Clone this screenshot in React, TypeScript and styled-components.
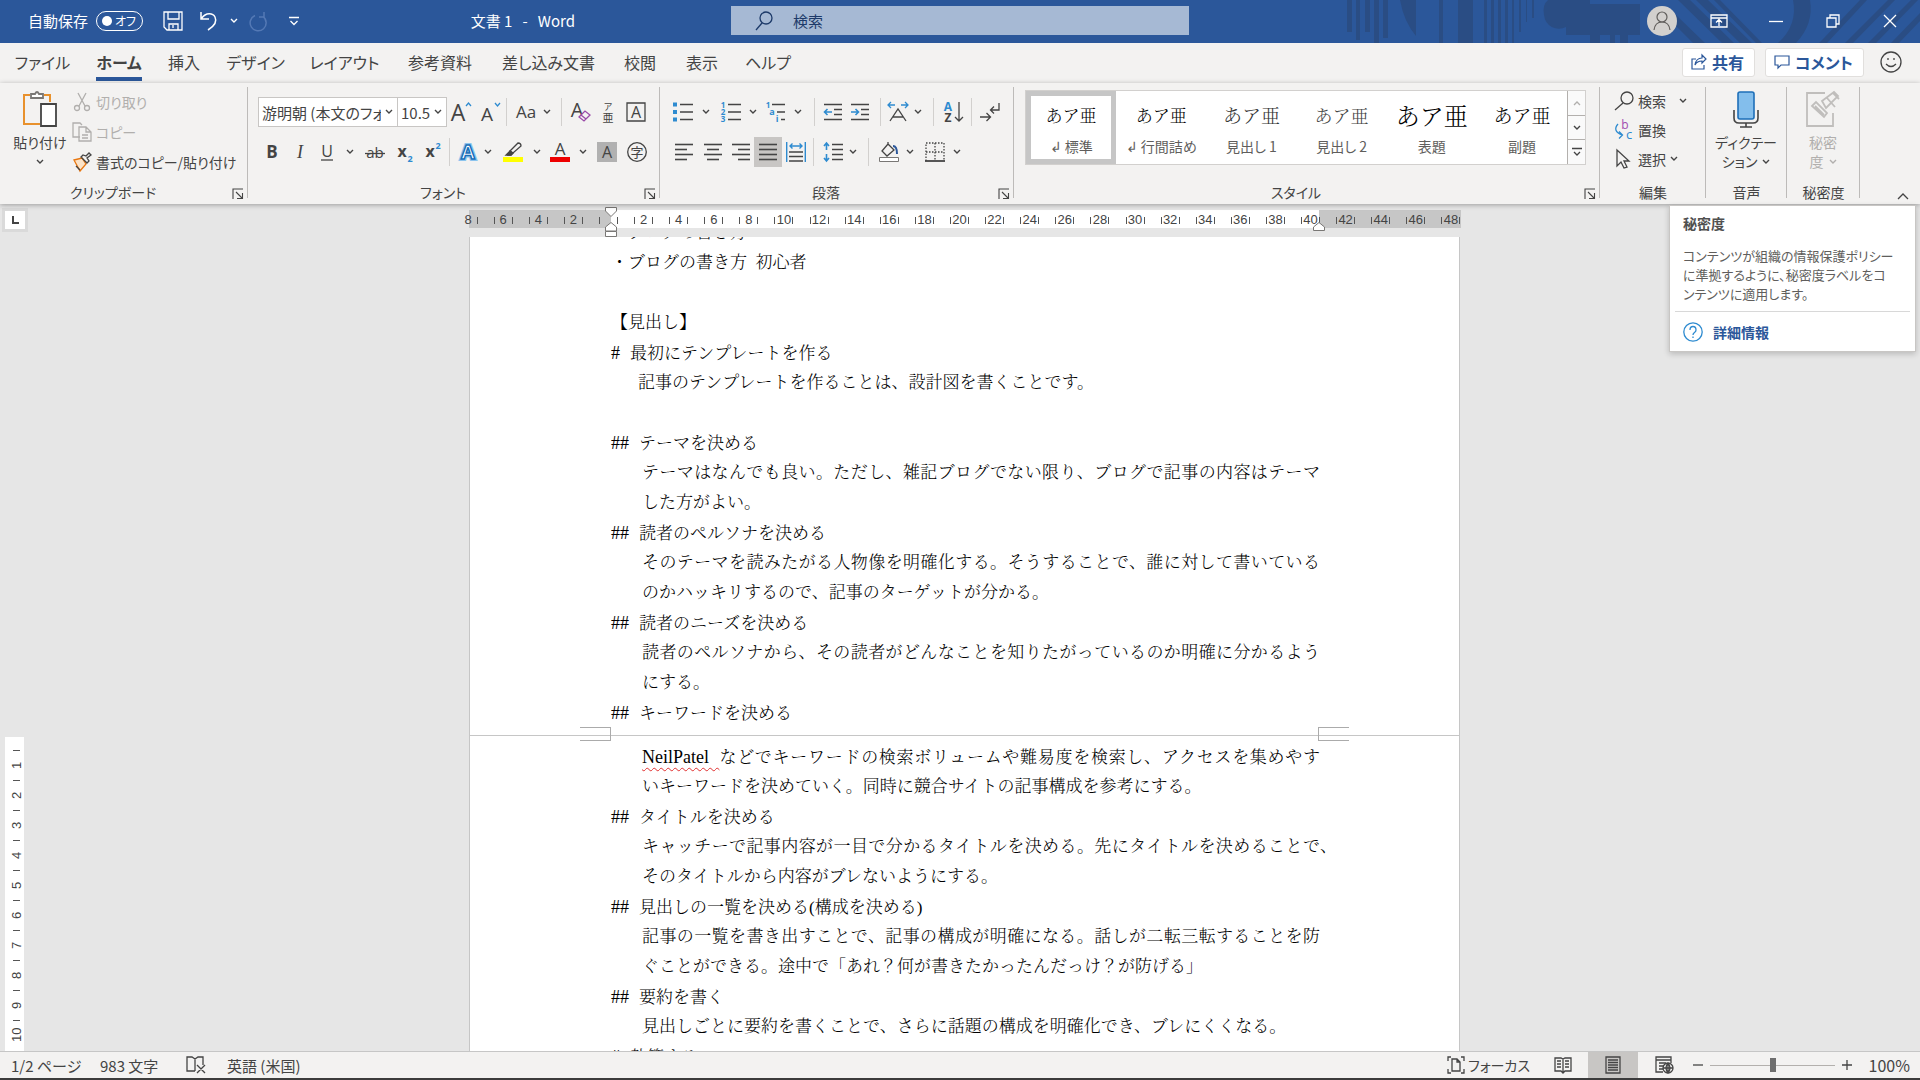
import React from "react";
import styled, { createGlobalStyle, css } from "styled-components";

const ui = `"Noto Sans CJK JP", "Noto Sans", sans-serif`;
const mincho = `"Liberation Serif", "Noto Serif CJK JP", "Noto Sans CJK JP", serif`;
const ink = "#444444";
const dim = "#b1afad";
const blue = "#2b579a";
const sky = "#2e8bd0";

const Global = createGlobalStyle`
  * { box-sizing: border-box; }
  html, body, #root { height: 100%; margin: 0; }
  body { font-family: ${ui}; font-size: 14px; color: ${ink}; overflow: hidden; font-feature-settings: "palt"; }
  button, input, select { font: inherit; font-feature-settings: inherit; color: inherit; border: 0; padding: 0; margin: 0; background: none; }
  svg { display: block; flex: none; overflow: visible; }
`;

const Shell = styled.div`
  height: 100vh;
  display: flex;
  flex-direction: column;
  background: #e6e6e6;
  white-space: nowrap;
`;

/* ---------- title bar ---------- */
const TitleBar = styled.header`
  position: relative;
  flex: none;
  height: 43px;
  display: grid;
  grid-template-columns: 731fr 458fr 731fr;
  align-items: center;
  padding-bottom: 2px;
  background: ${blue};
  color: #fff;
  font-size: 15px;
`;
const Decor = styled.svg`
  position: absolute;
  right: 0;
  top: 0;
  overflow: hidden;
`;
const QuickBar = styled.div`
  display: flex;
  align-items: center;
  padding-left: 28px;
`;
const AutoSave = styled.label`
  display: flex;
  align-items: center;
  gap: 8px;
  width: 134px;
`;
const Switch = styled.button`
  display: flex;
  align-items: center;
  justify-content: space-between;
  width: 47px;
  height: 20px;
  padding: 0 6px 0 5px;
  border: 1px solid #fff;
  border-radius: 10px;
  font-size: 12px;
  line-height: 18px;
  &::before {
    content: "";
    width: 10px;
    height: 10px;
    border-radius: 5px;
    background: #fff;
  }
`;
const Flat = styled.button<{ $w: number; $h?: number }>`
  display: flex;
  flex: none;
  align-items: center;
  justify-content: center;
  width: ${(p) => p.$w}px;
  height: ${(p) => p.$h ?? 30}px;
`;
const DocTitle = styled.div`
  margin-left: auto;
  padding-right: 156px;
  white-space: pre;
`;
const Search = styled.label`
  display: flex;
  align-items: center;
  gap: 20px;
  height: 29px;
  padding-left: 24px;
  background: #a6b9d4;
  color: #1d3a69;
`;
const SearchInput = styled.input`
  flex: 1;
  min-width: 0;
  outline: none;
  &::placeholder { color: #1d3a69; opacity: 1; }
`;
const WindowBar = styled.div`
  position: relative;
  display: flex;
  align-items: center;
  justify-content: flex-end;
  padding-right: 15px;
`;

/* ---------- tabs ---------- */
const TabRow = styled.nav`
  flex: none;
  display: flex;
  align-items: center;
  height: 40px;
  padding: 0 12px 2px 4px;
  background: #f3f2f1;
`;
const Tab = styled.button<{ $w: number; $on?: boolean }>`
  display: flex;
  justify-content: center;
  flex: none;
  width: ${(p) => p.$w}px;
  font-size: 16px;
  line-height: 30px;
  ${(p) => p.$on && css`
    font-weight: 700;
    span { box-shadow: 0 4px 0 ${blue}; }
  `}
`;
const TabActions = styled.div`
  display: flex;
  align-items: center;
  gap: 10px;
  margin-left: auto;
`;
const Action = styled.button`
  display: flex;
  align-items: center;
  gap: 5px;
  height: 29px;
  padding: 0 10px 0 8px;
  border: 1px solid #e1dfdd;
  border-radius: 3px;
  background: #fff;
  color: ${blue};
  font-size: 16px;
  font-weight: 700;
  line-height: 26px;
`;

/* ---------- ribbon ---------- */
const Ribbon = styled.section`
  position: relative;
  z-index: 2;
  flex: none;
  display: flex;
  height: 121px;
  background: #f3f2f1;
  box-shadow: 0 1px 5px rgba(0, 0, 0, 0.32);
`;
const GroupBox = styled.div<{ $w?: number }>`
  position: relative;
  display: flex;
  flex-direction: column;
  flex: ${(p) => (p.$w ? "none" : "1")};
  min-width: 0;
  width: ${(p) => (p.$w ? p.$w + "px" : "auto")};
  &::after {
    content: "";
    position: absolute;
    right: 0;
    top: 4px;
    bottom: 6px;
    width: 1px;
    background: #bdbbb9;
  }
`;
const GroupBody = styled.div<{ $pad?: string; $col?: boolean; $gap?: number }>`
  flex: 1;
  min-height: 0;
  display: flex;
  flex-direction: ${(p) => (p.$col ? "column" : "row")};
  gap: ${(p) => p.$gap ?? 0}px;
  padding: ${(p) => p.$pad ?? "0"};
`;
const GroupLabel = styled.div<{ $launch?: boolean }>`
  position: relative;
  flex: none;
  height: 22px;
  padding-right: ${(p) => (p.$launch ? 22 : 0)}px;
  line-height: 20px;
  text-align: center;
`;
const Launch = styled.button`
  position: absolute;
  right: 4px;
  top: 6px;
`;
const Row = styled.div`
  display: flex;
  align-items: center;
  height: 30px;
`;
const Tool = styled(Flat)<{ $on?: boolean }>`
  gap: 6px;
  background: ${(p) => (p.$on ? "#c8c6c4" : "none")};
`;
const Sep = styled.i<{ $w: number }>`
  flex: none;
  width: ${(p) => p.$w}px;
  height: 28px;
  background: linear-gradient(#d2d0ce, #d2d0ce) center / 1px 100% no-repeat;
`;
const Big = styled.button<{ $w: number; $off?: boolean }>`
  display: flex;
  flex-direction: column;
  align-items: center;
  justify-content: flex-start;
  flex: none;
  width: ${(p) => p.$w}px;
  padding-top: 7px;
  line-height: 19px;
  color: ${(p) => (p.$off ? dim : ink)};
  > svg:first-child { margin-bottom: 5px; }
  > svg:last-child { margin-top: 7px; }
  span { display: flex; align-items: center; gap: 5px; }
`;
const Item = styled.button<{ $off?: boolean; $h?: number }>`
  display: flex;
  align-items: center;
  gap: 4px;
  height: ${(p) => p.$h ?? 30}px;
  line-height: 20px;
  color: ${(p) => (p.$off ? dim : ink)};
  > svg:first-child { width: 20px; }
`;
const Picker = styled.div<{ $w: number }>`
  position: relative;
  display: flex;
  align-items: center;
  flex: none;
  width: ${(p) => p.$w}px;
  height: 30px;
  border: 1px solid #c8c6c4;
  margin-right: -1px;
  background: #fff;
  select {
    appearance: none;
    width: 100%;
    height: 28px;
    padding: 0 16px 0 3px;
    font-size: 15px;
    outline: none;
  }
  svg { position: absolute; right: 4px; pointer-events: none; }
`;
const Gallery = styled.div`
  display: flex;
  flex: 1;
  height: 75px;
  border: 1px solid #d2d0ce;
  background: #fff;
`;
const StyleCard = styled.button<{ $on?: boolean; $size: number; $tone: string }>`
  display: flex;
  flex-direction: column;
  align-items: center;
  justify-content: center;
  flex: 1 1 0;
  min-width: 0;
  gap: 6px;
  padding-top: 4px;
  border: 5px solid ${(p) => (p.$on ? "#c6c6c6" : "transparent")};
  line-height: 20px;
  color: #605e5c;
  b {
    height: 26px;
    line-height: 26px;
    font-family: ${mincho};
    font-feature-settings: "palt" 0;
    font-size: ${(p) => p.$size}px;
    font-weight: 300;
    color: ${(p) => p.$tone};
  }
`;
const GalleryNav = styled.div`
  display: flex;
  flex-direction: column;
  width: 18px;
  button {
    display: flex;
    flex: 1;
    align-items: center;
    justify-content: center;
    border-left: 1px solid #b3b0ad;
    background: #fafafa;
  }
  button + button { border-top: 1px solid #b3b0ad; }
`;
const RibbonEnd = styled.div`
  display: flex;
  align-items: flex-end;
  justify-content: flex-end;
  flex: none;
  width: 60px;
  padding: 0 11px 4px 0;
`;

/* ---------- tooltip ---------- */
const Tip = styled.aside`
  position: absolute;
  z-index: 3;
  right: 4px;
  top: 205px;
  width: 247px;
  padding: 7px 5px 6px;
  border: 1px solid #c8c6c4;
  background: #fff;
  box-shadow: 0 2px 6px rgba(0, 0, 0, 0.2);
  color: #605e5c;
  h4 { margin: 0 8px 13px; font-size: 14px; line-height: 20px; color: #505050; }
  p { margin: 0 8px; font-size: 13px; line-height: 19px; padding-bottom: 8px; }
`;
const TipLink = styled.a`
  display: flex;
  align-items: center;
  gap: 10px;
  padding: 7px 8px 0;
  border-top: 1px solid #d8d8d8;
  color: ${blue};
  font-weight: 700;
  line-height: 26px;
  text-decoration: none;
`;

/* ---------- workspace ---------- */
const Workspace = styled.main`
  flex: 1;
  min-height: 0;
  display: grid;
  grid-template-columns: 30px 1fr;
  grid-template-rows: 33px 1fr;
`;
const Corner = styled.div`
  display: flex;
  align-items: center;
  justify-content: center;
  width: 26px;
  height: 24px;
  margin: 4px 0 0 2px;
  border: 3px solid #dadada;
  background: #fff;
`;
const Centre = styled.div`
  display: flex;
  justify-content: center;
  min-height: 0;
  padding-right: 21px;
`;
const HRuler = styled.div`
  position: relative;
  width: 992px;
  height: 18px;
  margin-top: 6px;
  background: linear-gradient(90deg, #c6c6c6 142px, #fff 142px 850px, #c6c6c6 850px);
`;
const HScale = styled.div`
  height: 18px;
  margin-left: -5px;
  overflow: hidden;
  > div {
    display: grid;
    grid-template-columns: repeat(29, 1fr);
    width: 1018px;
    margin-left: -13px;
  }
`;
const HCell = styled.span`
  display: flex;
  justify-content: center;
  align-items: center;
  height: 20px;
  font: 13px/20px "Liberation Sans", Arial, sans-serif;
  &::before, &::after { content: ""; width: 1px; height: 7px; background: #555; }
  span { width: 17px; display: flex; justify-content: center; }
`;
const Marker = styled.svg<{ $x: number }>`
  position: absolute;
  left: ${(p) => p.$x}px;
  top: -3px;
`;
const VRuler = styled.div`
  margin-top: 500px;
  margin-left: 5px;
  width: 19px;
  padding-top: 13px;
  background: #fff;
  overflow: hidden;
`;
const VCell = styled.div`
  display: flex;
  align-items: center;
  justify-content: center;
  width: 23px;
  height: 30px;
  writing-mode: vertical-rl;
  transform: rotate(180deg);
  background: linear-gradient(#555, #555) 8px 100% / 7px 1px no-repeat;
  font: 13px/23px "Liberation Sans", Arial, sans-serif;
`;
const Page = styled.article`
  width: 991px;
  overflow: hidden;
  border: solid #c6c6c6;
  border-width: 0 1px;
  background: #fff;
  color: #000;
  font-family: ${mincho};
  font-size: 17px;
  font-weight: 300;
  font-feature-settings: "palt" 0;
`;
const Flow = styled.div`
  margin-top: -20px;
`;
const Line = styled.p<{ $in?: number; $full?: boolean; $hang?: boolean }>`
  margin: 0 ${(p) => (p.$hang ? 122 : 139)}px 0 ${(p) => 141 + (p.$in ?? 0)}px;
  height: 30px;
  line-height: 32px;
  text-align: left;
  ${(p) => p.$full && css`text-align-last: justify;`}
`;
const Mark = styled.span`
  margin-right: 10px;
  font-size: 18px;
`;
const Misspelt = styled.span`
  font-size: 18px;
  text-decoration: underline wavy #e03030 1px;
  text-underline-offset: 4px;
`;
const Break = styled.div`
  display: flex;
  justify-content: space-between;
  height: 14px;
  padding: 0 110px;
  background: linear-gradient(#c6c6c6, #c6c6c6) 0 8px / 100% 1px no-repeat;
  i { width: 31px; border: 1px solid #ababab; border-left: 0; }
  i + i { border-left: 1px solid #ababab; border-right: 0; }
`;

/* ---------- status bar ---------- */
const Status = styled.footer`
  flex: none;
  display: flex;
  align-items: center;
  height: 29px;
  padding: 0 10px 0 11px;
  border-top: 1px solid #c6c6c6;
  border-bottom: 2px solid #3c3c3c;
  background: #f3f2f1;
  font-size: 15px;
`;
const Stat = styled.button<{ $w: number }>`
  display: flex;
  align-items: center;
  flex: none;
  gap: 3px;
  width: ${(p) => p.$w}px;
  height: 26px;
`;
const FocusStat = styled(Stat)`
  font-size: 14px;
`;
const Percent = styled(Stat)`
  justify-content: flex-end;
  font-size: 16px;
`;
const Zoom = styled.input`
  appearance: none;
  width: 125px;
  height: 20px;
  margin: 0 6px;
  background: linear-gradient(#b3b0ad, #b3b0ad) center / 100% 1px no-repeat;
  &::-webkit-slider-thumb { appearance: none; width: 6px; height: 14px; background: #6e6e6e; }
`;
const Push = styled.div`
  flex: 1;
`;

/* ---------- icons ---------- */
type IcoProps = { w?: number; h?: number; c?: string; s?: number; children: React.ReactNode };
const Ico = ({ w = 20, h = 20, c = ink, s = 1.3, children }: IcoProps) => (
  <svg width={w} height={h} viewBox={`0 0 ${w} ${h}`} fill="none" stroke={c} strokeWidth={s} aria-hidden="true">{children}</svg>
);
const Chev = ({ c = ink }: { c?: string }) => (
  <Ico w={8} h={6} c={c} s={1.4}><path d="M1 1l3 3 3-3" /></Ico>
);
const Letter = ({ x, y, size, fill = ink, bold, children }: { x: number; y: number; size: number; fill?: string; bold?: boolean; children: string }) => (
  <text x={x} y={y} fontSize={size} fill={fill} stroke="none" fontWeight={bold ? 700 : 400} textAnchor="middle" fontFamily={`"Open Sans", "Noto Sans CJK JP", sans-serif`}>{children}</text>
);
const LaunchIcon = () => (
  <Ico w={12} h={12} s={1.1}><path d="M1 11V1h10M4 4l6 6M10.500 5v5.500H5" /></Ico>
);
const Lines = ({ rows }: { rows: [number, number][] }) => (
  <Ico s={1.6}>{rows.map(([a, b], i) => <path key={i} d={`M${a} ${2.500 + i * 5}H${b}`} />)}</Ico>
);

const tabs: [string, number][] = [["ファイル", 77], ["ホーム", 76], ["挿入", 54], ["デザイン", 89], ["レイアウト", 89], ["参考資料", 102], ["差し込み文書", 115], ["校閲", 68], ["表示", 56], ["ヘルプ", 76]];
const styles: [string, number, string][] = [["↲ 標準", 17, "#000"], ["↲ 行間詰め", 17, "#000"], ["見出し 1", 19, "#333"], ["見出し 2", 18, "#444"], ["表題", 24, "#000"], ["副題", 19, "#000"]];

type L = { h?: string; t?: string; in?: number; full?: boolean; hang?: boolean };
const before: L[] = [
  { t: "・ブログの書き方" },
  { t: "・ブログの書き方\u00a0\u00a0初心者" },
  {},
  { t: "【見出し】" },
  { h: "#", t: "最初にテンプレートを作る" },
  { t: "記事のテンプレートを作ることは、設計図を書くことです。", in: 27 },
  {},
  { h: "##", t: "テーマを決める" },
  { t: "テーマはなんでも良い。ただし、雑記ブログでない限り、ブログで記事の内容はテーマ", in: 31, full: true },
  { t: "した方がよい。", in: 31 },
  { h: "##", t: "読者のペルソナを決める" },
  { t: "そのテーマを読みたがる人物像を明確化する。そうすることで、誰に対して書いている", in: 31, full: true },
  { t: "のかハッキリするので、記事のターゲットが分かる。", in: 31 },
  { h: "##", t: "読者のニーズを決める" },
  { t: "読者のペルソナから、その読者がどんなことを知りたがっているのか明確に分かるよう", in: 31, full: true },
  { t: "にする。", in: 31 },
  { h: "##", t: "キーワードを決める" },
];
const after: L[] = [
  { t: "いキーワードを決めていく。同時に競合サイトの記事構成を参考にする。", in: 31 },
  { h: "##", t: "タイトルを決める" },
  { t: "キャッチーで記事内容が一目で分かるタイトルを決める。先にタイトルを決めることで、", in: 31, full: true, hang: true },
  { t: "そのタイトルから内容がブレないようにする。", in: 31 },
  { h: "##", t: "見出しの一覧を決める(構成を決める)" },
  { t: "記事の一覧を書き出すことで、記事の構成が明確になる。話しが二転三転することを防", in: 31, full: true },
  { t: "ぐことができる。途中で「あれ？何が書きたかったんだっけ？が防げる」", in: 31 },
  { h: "##", t: "要約を書く" },
  { t: "見出しごとに要約を書くことで、さらに話題の構成を明確化でき、ブレにくくなる。", in: 31 },
  { h: "#", t: "執筆する" },
];
const Text = ({ lines }: { lines: L[] }) => (
  <>{lines.map((l, i) => (
    <Line key={i} $in={l.in} $full={l.full} $hang={l.hang}>{l.h && <Mark>{l.h}</Mark>}{l.t}</Line>
  ))}</>
);

const Group = ({ w, label, launch, children }: { w?: number; label: string; launch?: boolean; children: React.ReactNode }) => (
  <GroupBox $w={w}>
    {children}
    <GroupLabel $launch={launch}>{label}{launch && <Launch aria-label={label}><LaunchIcon /></Launch>}</GroupLabel>
  </GroupBox>
);

export default function App() {
  return (
    <Shell>
      <Global />
      <TitleBar>
        <Decor width="580" height="43" viewBox="0 0 580 43" fill="#2a4d84" aria-hidden="true">
          <path d="M7 0h5v32H7zM16 0h4v40h-4zM25 0h5v32h-5zM34 0h5v43h-5zM43 0h5v38h-5zM60 0h16v36Q64 22 60 0zM99 0h4v43h-4zM118 0h15v43h-15zM144 0h3v43h-3zM151 0h3v43h-3zM158 0h3v43h-3zM165 0h3v43h-3zM172 0h2v43h-2zM179 0h2v32h-2zM186 0h1v22h-1zM192 0h2v18h-2z" />
          <path d="M208 0h42v4h50v31h-12v8h-8v-8h-5v8h-5v-8h-10v8h-10V35h-24v-8a15 15 0 0 1-22-12Q202 5 208 0z" />
          <path d="M335 14l30 29h-12l-22-22zM338 0h12l44 43h-12zM356 0h12l44 43h-12zM374 0h6l42 43h-6z" />
          <path d="M453 0h17q4 24-14 43h-18q20-18 15-43zM484 38L520 0h7l-40 43h-8zM505 43L548 0h7l-42 43zM528 43L571 0h7l-42 43zM551 43l29-30v8l-21 22z" />
        </Decor>
        <QuickBar>
          <AutoSave>自動保存<Switch role="switch" aria-checked="false">オフ</Switch></AutoSave>
          <Flat $w={22} aria-label="上書き保存"><Ico c="#fff"><path d="M1 1h18v18H4l-3-3zM5 1v7h11V1M6 19v-6h9v6M10 14v3" /></Ico></Flat>
          <Flat $w={50} aria-label="元に戻す"><Ico c="#fff" s={1.5}><path d="M2 1v7h8M2.500 7.500C7 1 14 2 16 6s1 8-7 13" /></Ico></Flat>
          <Flat $w={0} aria-label="元に戻す履歴"><Chev c="#fff" /></Flat>
          <Flat $w={50} aria-label="繰り返し"><Ico c="#5479b5" s={1.5}><path d="M15 1v5h-5M14 5.500a8 8 0 1 1-8-1" /></Ico></Flat>
          <Flat $w={20} aria-label="クイック アクセスのカスタマイズ"><Ico w={10} h={10} c="#fff"><path d="M0 1.500h10M1.500 5L5 8.500 8.500 5" /></Ico></Flat>
          <DocTitle>{"文書 1   -   Word"}</DocTitle>
        </QuickBar>
        <Search>
          <Ico w={18} h={20} c="#1d3a69"><circle cx="11" cy="7" r="6" /><path d="M7 12L1 19" /></Ico>
          <SearchInput placeholder="検索" aria-label="検索" />
        </Search>
        <WindowBar>
          <Flat $w={30} aria-label="アカウント"><svg width="30" height="30" viewBox="0 0 30 30"><circle cx="15" cy="15" r="15" fill="#d2d0ce" /><g fill="none" stroke="#605e5c" strokeWidth="1.200"><circle cx="15" cy="11" r="5" /><path d="M7 24q1-8 8-8t8 8" /></g></svg></Flat>
          <Flat $w={84} aria-label="リボンの表示オプション"><Ico w={18} h={14} c="#fff"><path d="M1 1h16v12H1zM1 4h16M9 12V6M6 8.500L9 5.500l3 3" /></Ico></Flat>
          <Flat $w={30} aria-label="最小化"><Ico w={14} h={14} c="#fff"><path d="M0 7.500h14" /></Ico></Flat>
          <Flat $w={84} aria-label="元に戻す (縮小)"><Ico w={14} h={14} c="#fff"><path d="M1 4h9v9H1zM4 4V1h9v9h-3" /></Ico></Flat>
          <Flat $w={30} aria-label="閉じる"><Ico w={14} h={14} c="#fff"><path d="M1 1l12 12M13 1L1 13" /></Ico></Flat>
        </WindowBar>
      </TitleBar>

      <TabRow>
        {tabs.map(([t, w]) => <Tab key={t} $w={w} $on={t === "ホーム"}><span>{t}</span></Tab>)}
        <TabActions>
          <Action><Ico w={16} h={16} c={blue} s={1.200}><path d="M5 5H1v10h12v-4M4 11q1-7 7-7V1l4 4-4 4V7q-5 0-7 4z" /></Ico>共有</Action>
          <Action><Ico w={16} h={16} c={blue} s={1.200}><path d="M1 2h14v9H7l-3 3v-3H1z" /></Ico>コメント</Action>
          <Flat $w={34} aria-label="フィードバック"><Ico w={22} h={22}><circle cx="11" cy="11" r="10" /><path d="M8 7v2M14 7v2M6 13q5 5 10 0" /></Ico></Flat>
        </TabActions>
      </TabRow>

      <Ribbon>
        <Group w={248} label="クリップボード" launch>
          <GroupBody $pad="0 0 0 8px">
            <Big $w={64}>
              <Ico w={36} h={38} s={1.8}><path d="M8 5H2v29h16M22 5h6v7" stroke="#e8912d" strokeWidth="2" /><path d="M9 8V4h4q2-4 4 0h4v4z" stroke="#797775" fill="#fff" /><path d="M19 14h15v22H19z" fill="#fff" /></Ico>
              貼り付け<Chev />
            </Big>
            <GroupBody $col $pad="4px 0 0">
              <Item $off><Ico c={dim}><path d="M6 1l7 13M14 1L7 14" /><circle cx="5" cy="16" r="2.500" /><circle cx="15" cy="16" r="2.500" /></Ico>切り取り</Item>
              <Item $off><Ico c={dim}><path d="M8 15H1V1h7l2 2M7 5h7l5 5v9H7zM14 5v5h5M10 13h6M10 16h6" /></Ico>コピー</Item>
              <Item><Ico><path d="M2 8l8-2 4 6-6 7z" stroke="#e8760f" fill="#fbe3c8" /><path d="M9 5l6 6 2-2-2-3 4-3-2-2-3 3-3-1zM4 14l4 4" /></Ico>書式のコピー/貼り付け</Item>
            </GroupBody>
          </GroupBody>
        </Group>

        <Group w={412} label="フォント" launch>
          <GroupBody $col $gap={10} $pad="14px 0 0 10px">
            <Row>
              <Picker $w={140}><select aria-label="フォント"><option>游明朝 (本文のフォント)</option></select><Chev /></Picker>
              <Picker $w={50}><select aria-label="フォント サイズ"><option>10.5</option></select><Chev /></Picker>
              <Tool $w={29} aria-label="拡大"><Ico w={24} h={24}><Letter x={9} y={21} size={23}>A</Letter><path d="M17 6l2.500-3L22 6" stroke={sky} /></Ico></Tool>
              <Tool $w={29} aria-label="縮小"><Ico w={24} h={24}><Letter x={9} y={21} size={19}>A</Letter><path d="M17 3l2.500 3L22 3" stroke={sky} /></Ico></Tool>
              <Sep $w={5} />
              <Tool $w={50} aria-label="文字種の変換"><Ico w={20} h={22}><Letter x={9} y={17} size={17}>Aa</Letter></Ico><Chev /></Tool>
              <Sep $w={5} />
              <Tool $w={32} aria-label="書式のクリア"><Ico w={22} h={24}><Letter x={8} y={17} size={20}>A</Letter><path d="M10 17l6-6 5 4-6 6zM12 15l5 4" stroke="#9a4aa8" fill="#f3f2f1" /></Ico></Tool>
              <Tool $w={24} aria-label="ルビ"><Ico w={14} h={24}><Letter x={7} y={10} size={9}>ア</Letter><Letter x={7} y={22} size={11}>亜</Letter></Ico></Tool>
              <Tool $w={32} aria-label="囲み線"><Ico><path d="M1 1h18v18H1z" /><Letter x={10} y={16} size={16}>A</Letter></Ico></Tool>
            </Row>
            <Row>
              <Tool $w={28} aria-label="太字"><Ico><Letter x={10} y={16} size={17} bold>B</Letter></Ico></Tool>
              <Tool $w={28} aria-label="斜体"><Ico><text x="10" y="16" fontSize="18" fill={ink} stroke="none" fontStyle="italic" textAnchor="middle" fontFamily="Liberation Serif">I</text></Ico></Tool>
              <Tool $w={26} aria-label="下線"><Ico><Letter x={10} y={15} size={16}>U</Letter><path d="M4 18h12" /></Ico></Tool>
              <Tool $w={20} aria-label="下線の種類"><Chev /></Tool>
              <Tool $w={30} aria-label="取り消し線"><Ico><Letter x={10} y={16} size={15}>ab</Letter><path d="M0 11.500h20" /></Ico></Tool>
              <Tool $w={32} aria-label="下付き"><Ico><Letter x={6} y={15} size={16} bold>x</Letter><Letter x={14} y={20} size={9} fill={sky} bold>2</Letter></Ico></Tool>
              <Tool $w={24} aria-label="上付き"><Ico><Letter x={6} y={15} size={16} bold>x</Letter><Letter x={14} y={7} size={9} fill={sky} bold>2</Letter></Ico></Tool>
              <Sep $w={7} />
              <Tool $w={30} aria-label="文字の効果"><Ico w={22} h={22}><text x="11" y="18" fontSize="20" fontWeight="700" fill="#fff" stroke="#8cc4ee" strokeWidth="4" textAnchor="middle" fontFamily="Open Sans">A</text><text x="11" y="18" fontSize="20" fontWeight="700" fill="#fff" stroke="#1a6fb8" strokeWidth="1.500" textAnchor="middle" fontFamily="Open Sans">A</text></Ico></Tool>
              <Tool $w={10} aria-label="文字の効果の一覧"><Chev /></Tool>
              <Tool $w={40} aria-label="蛍光ペン"><Ico><path d="M7 9l8-8q3 0 3 3l-8 7zM7 9l-2 4h3l2-2" /><path d="M7 9l3 2-2 2H3z" fill={ink} /><path d="M0 15h20v5H0z" fill="#ff0" stroke="none" /></Ico></Tool>
              <Tool $w={8} aria-label="蛍光ペンの色"><Chev /></Tool>
              <Tool $w={38} aria-label="フォントの色"><Ico><Letter x={10} y={13} size={17}>A</Letter><path d="M0 15h20v5H0z" fill="#e00" stroke="none" /></Ico></Tool>
              <Tool $w={8} aria-label="フォントの色の一覧"><Chev /></Tool>
              <Tool $w={40} aria-label="文字の網かけ"><Ico><path d="M0 0h20v20H0z" fill="#b1b1b1" stroke="none" /><Letter x={10} y={16} size={16}>A</Letter></Ico></Tool>
              <Tool $w={20} aria-label="囲い文字"><Ico><circle cx="10" cy="10" r="9.300" /><Letter x={10} y={15} size={13}>字</Letter></Ico></Tool>
            </Row>
          </GroupBody>
        </Group>

        <Group w={354} label="段落" launch>
          <GroupBody $col $gap={10} $pad="14px 0 0 9px">
            <Row>
              <Tool $w={28} aria-label="箇条書き"><Ico s={1.600}><path d="M7 2.500h13M7 10h13M7 17.500h13" /><path d="M0 .500h4v4H0zM0 8h4v4H0zM0 15.500h4v4H0z" fill={sky} stroke="none" /></Ico></Tool>
              <Tool $w={18} aria-label="行頭文字"><Chev /></Tool>
              <Tool $w={32} aria-label="段落番号"><Ico s={1.600}><path d="M7 2.500h13M7 10h13M7 17.500h13" /><Letter x={2} y={6} size={8} fill={sky} bold>1</Letter><Letter x={2} y={13} size={8} fill={sky} bold>2</Letter><Letter x={2} y={20} size={8} fill={sky} bold>3</Letter></Ico></Tool>
              <Tool $w={12} aria-label="番号書式"><Chev /></Tool>
              <Tool $w={34} aria-label="アウトライン"><Ico s={1.600}><path d="M6 2.500h13M11 10h8M15 17.500h4" /><Letter x={2} y={6} size={8} fill={sky} bold>1</Letter><Letter x={6} y={13} size={9} fill={sky} bold>a</Letter><Letter x={11} y={20} size={9} fill={sky} bold>i</Letter></Ico></Tool>
              <Tool $w={10} aria-label="アウトラインの一覧"><Chev /></Tool>
              <Sep $w={22} />
              <Tool $w={16} aria-label="インデントを減らす"><Ico s={1.600}><path d="M1 2.500h18M11 7.500h8M11 12.500h8M1 17.500h18" /><path d="M9 10H2M4.500 7L1.500 10l3 3" stroke={sky} /></Ico></Tool>
              <Tool $w={38} aria-label="インデントを増やす"><Ico s={1.600}><path d="M1 2.500h18M11 7.500h8M11 12.500h8M1 17.500h18" /><path d="M1 10h7M5.500 7l3 3-3 3" stroke={sky} /></Ico></Tool>
              <Sep $w={3} />
              <Tool $w={32} aria-label="拡張書式"><Ico w={22} h={22}><path d="M3 20L11 8l8 12M6 16h10" /><path d="M1 4h7M4 1L1 4l3 3M21 4h-7M18 1l3 3-3 3" stroke={sky} /></Ico></Tool>
              <Tool $w={8} aria-label="拡張書式の一覧"><Chev /></Tool>
              <Sep $w={22} />
              <Tool $w={18} aria-label="並べ替え"><Ico h={24}><Letter x={5} y={11} size={12} fill={sky} bold>A</Letter><Letter x={5} y={22} size={12} bold>Z</Letter><path d="M16 2v19M12 17l4 4 4-4" /></Ico></Tool>
              <Sep $w={18} />
              <Tool $w={20} aria-label="編集記号"><Ico><path d="M19 1v7h-8M14 4.500L10.500 8l3.500 3.500M0 15h10M6.500 11l4 4-4 4" /></Ico></Tool>
            </Row>
            <Row>
              <Tool $w={30} aria-label="左揃え"><Lines rows={[[1, 19], [1, 13], [1, 19], [1, 13]]} /></Tool>
              <Tool $w={28} aria-label="中央揃え"><Lines rows={[[1, 19], [4, 16], [1, 19], [4, 16]]} /></Tool>
              <Tool $w={27} aria-label="右揃え"><Lines rows={[[1, 19], [7, 19], [1, 19], [7, 19]]} /></Tool>
              <Tool $w={28} $on aria-label="両端揃え"><Lines rows={[[1, 19], [1, 19], [1, 19], [1, 19]]} /></Tool>
              <Tool $w={28} aria-label="均等割り付け"><Ico s={1.600}><path d="M3 10h14M3 14.500h14M3 19h14" /><path d="M.700 0v20M19.300 0v20M4 4h12M6.500 1.500L4 4l2.500 2.500M13.500 1.500L16 4l-2.500 2.500" stroke={sky} strokeWidth="1.400" /></Ico></Tool>
              <Sep $w={7} />
              <Tool $w={32} aria-label="行間"><Ico s={1.600}><path d="M9 2.500h11M9 7.500h11M9 12.500h11M9 17.500h11" /><path d="M3.500 1.500V8M1 4l2.500-3L6 4M3.500 12v6M1 16l2.500 3L6 16" stroke={sky} /></Ico></Tool>
              <Tool $w={8} aria-label="行間の一覧"><Chev /></Tool>
              <Sep $w={22} />
              <Tool $w={20} aria-label="塗りつぶし"><Ico><path d="M9 2l6 6-7 6-5-5zM9 2V0" /><path d="M14 4q4 0 4 8" stroke={blue} strokeWidth="2" /><path d="M.500 15.500h19v4H.500z" fill="#fff" stroke="#797775" strokeWidth="1" /></Ico></Tool>
              <Tool $w={22} aria-label="塗りつぶしの色"><Chev /></Tool>
              <Tool $w={28} aria-label="罫線"><Ico><path d="M1 19V1h18v18M10 1v18M1 10h18" strokeDasharray="1.500 1.500" /><path d="M0 19h20" strokeWidth="1.800" /></Ico></Tool>
              <Tool $w={16} aria-label="罫線の種類"><Chev /></Tool>
            </Row>
          </GroupBody>
        </Group>

        <Group label="スタイル" launch>
          <GroupBody $pad="7px 14px 0 11px">
            <Gallery>
              {styles.map(([n, s, c], i) => <StyleCard key={n} $on={i === 0} $size={s} $tone={c}><b>あア亜</b>{n}</StyleCard>)}
              <GalleryNav>
                <button aria-label="上へ"><Ico w={8} h={6} c={dim}><path d="M1 5l3-3 3 3" /></Ico></button>
                <button aria-label="下へ"><Chev /></button>
                <button aria-label="その他"><Ico w={10} h={10}><path d="M0 1.500h10M2 5l3 3 3-3" /></Ico></button>
              </GalleryNav>
            </Gallery>
          </GroupBody>
        </Group>

        <Group w={106} label="編集">
          <GroupBody $col $pad="3px 0 0 14px">
            <Item $h={29}><Ico><circle cx="13" cy="7" r="6" /><path d="M9 12L1 19" /></Ico>検索&nbsp;&nbsp;&nbsp;<Chev /></Item>
            <Item $h={29}><Ico><Letter x={11} y={9} size={12} fill="#a04db0">b</Letter><Letter x={15} y={19} size={13} fill={sky}>c</Letter><path d="M4 4Q-2 11 8 15M5 11.500L8.500 15 5 18.500" stroke={sky} /></Ico>置換</Item>
            <Item $h={29}><Ico><path d="M3 1v16l4-4 3 6 3-1-3-6h5z" /></Ico>選択<Chev /></Item>
          </GroupBody>
        </Group>
        <Group w={81} label="音声">
          <GroupBody><Big $w={80}>
            <Ico w={28} h={38} s={1.6}><rect x="6" y="2" width="16" height="27" rx="2" fill="#83beec" stroke="#1e6fb8" /><path d="M2 20v8q0 5 5 5h14q5 0 5-5v-8M14 33v4M8 37h12" /></Ico>
            <span>ディクテー</span><span>ション<Chev /></span>
          </Big></GroupBody>
        </Group>
        <Group w={73} label="秘密度">
          <GroupBody><Big $w={72} $off disabled>
            <Ico w={36} h={38} c="#c0bebc" s={1.8}><path d="M20 3H2v33h26V23" /><path d="M7 16l4-4 11 11-3 4zM10 16l9 9M17 11l12-9 4 4-12 12zM22 8l8 9M28 3l6 6" /></Ico>
            <span>秘密</span><span>度<Chev c={dim} /></span>
          </Big></GroupBody>
        </Group>
        <RibbonEnd>
          <button aria-label="リボンを折りたたむ"><Ico w={12} h={8}><path d="M1 7l5-5 5 5" /></Ico></button>
        </RibbonEnd>
      </Ribbon>

      <Tip>
        <h4>秘密度</h4>
        <p>コンテンツが組織の情報保護ポリシー<br />に準拠するように、秘密度ラベルをコ<br />ンテンツに適用します。</p>
        <TipLink href="#help">
          <Ico c={sky}><circle cx="10" cy="10" r="9.200" /><path d="M7 8q0-3.500 3-3.500T13 8q0 1.500-1.500 2.500T10 13M10 14.500v1.500" /></Ico>
          詳細情報
        </TipLink>
      </Tip>

      <Workspace>
        <Corner><Ico w={10} h={10} s={2}><path d="M3 1v7h6" /></Ico></Corner>
        <Centre>
          <HRuler>
            <HScale><div>{Array.from({ length: 29 }, (_, i) => Math.abs(i * 2 - 8)).map((n, i) => <HCell key={i}><span>{n || ""}</span></HCell>)}</div></HScale>
            <Marker $x={136} width="12" height="31" viewBox="0 0 12 31" fill="#fff" stroke="#797775"><path d="M.500.500h11V4L6 9.500.500 4zM6 15.500L11.500 20v4H.500v-4zM.500 24.500h11v5H.500z" /></Marker>
            <Marker $x={844} width="12" height="31" viewBox="0 0 12 31" fill="#fff" stroke="#797775"><path d="M6 15.500L11.500 20v3.500H.500V20z" /></Marker>
          </HRuler>
        </Centre>
        <VRuler>
          {Array.from({ length: 10 }, (_, i) => <VCell key={i}>{i + 1}</VCell>)}
        </VRuler>
        <Centre>
          <Page>
            <Flow>
              <Text lines={before} />
              <Break><i /><i /></Break>
              <Line $in={31} $full><Misspelt>NeilPatel&nbsp;&nbsp;</Misspelt>などでキーワードの検索ボリュームや難易度を検索し、アクセスを集めやす</Line>
              <Text lines={after} />
            </Flow>
          </Page>
        </Centre>
      </Workspace>

      <Status>
        <Stat $w={89}>1/2 ページ</Stat>
        <Stat $w={86}>983 文字</Stat>
        <Stat $w={41} aria-label="校正"><Ico h={18}><path d="M9 15H1V1h5l3 2 3-2h5v8M9 3v12M11 9l8 8M19 9l-8 8" /></Ico></Stat>
        <Stat $w={90}>英語 (米国)</Stat>
        <Push />
        <FocusStat $w={91}><Ico w={18} h={18}><path d="M4 1H1v4M14 1h3v4M1 13v4h3M17 13v4h-3M5 3h5l3 3v9H5zM10 3v3h3" /></Ico>フォーカス</FocusStat>
        <Flat $w={50} $h={26} aria-label="閲覧モード"><Ico w={18} h={18}><path d="M1 2h6l2 1 2-1h6v13h-6l-2 2-2-2H1zM9 3v13M3 5h4M3 8h4M3 11h4M11 5h4M11 8h4M11 11h4" /></Ico></Flat>
        <Tool $w={50} $h={26} $on aria-label="印刷レイアウト"><Ico w={16} h={18}><path d="M1 1h14v16H1zM3 4h10M3 6.500h10M3 9h10M3 11.500h10M3 14h10" /></Ico></Tool>
        <Flat $w={54} $h={26} aria-label="Web レイアウト"><Ico h={18}><path d="M8 16H1V1h15v6M1 4h15M4 7h7M4 10h5M4 13h4" /><circle cx="13" cy="12" r="5" /><path d="M8 12h10M13 7v10M13 7q-4 5 0 10M13 7q4 5 0 10" /></Ico></Flat>
        <Flat $w={12} $h={26} aria-label="縮小"><Ico w={10} h={10}><path d="M0 5h10" /></Ico></Flat>
        <Zoom type="range" min="0" max="200" defaultValue="100" aria-label="ズーム" />
        <Flat $w={12} $h={26} aria-label="拡大"><Ico w={10} h={10}><path d="M0 5h10M5 0v10" /></Ico></Flat>
        <Percent $w={57}>100%</Percent>
      </Status>
    </Shell>
  );
}
